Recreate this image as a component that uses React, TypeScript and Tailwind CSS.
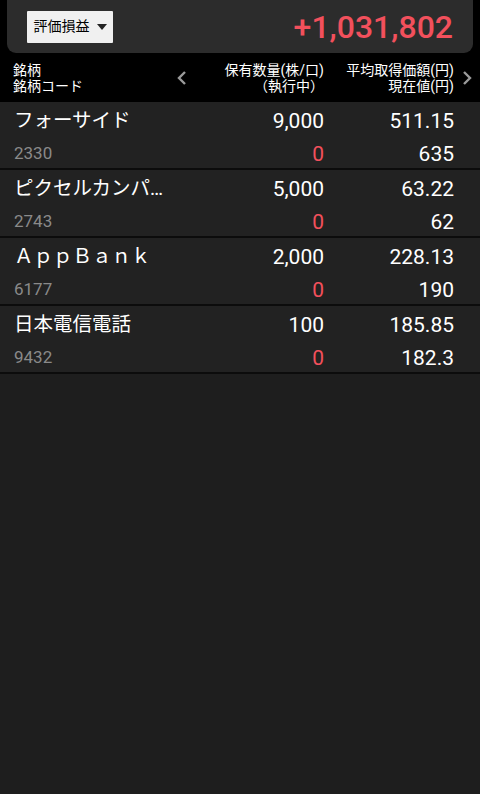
import React from 'react';

const font = { fontFamily: 'Roboto, "Noto Sans CJK JP", sans-serif' };

const rows = [
  { name: 'フォーサイド', code: '2330', qty: '9,000', exec: '0', avg: '511.15', now: '635' },
  { name: 'ピクセルカンパ…', code: '2743', qty: '5,000', exec: '0', avg: '63.22', now: '62' },
  { name: 'ＡｐｐＢａｎｋ', code: '6177', qty: '2,000', exec: '0', avg: '228.13', now: '190' },
  { name: '日本電信電話', code: '9432', qty: '100', exec: '0', avg: '185.85', now: '182.3' },
];

const Chevron: React.FC<{ dir: 'left' | 'right' }> = ({ dir }) => (
  <svg width="10" height="16" viewBox="0 0 10 16" fill="none">
    <path
      d={dir === 'left' ? 'M8 2 L2 8 L8 14' : 'M2 2 L8 8 L2 14'}
      stroke="#9a9a9a"
      strokeWidth="2.4"
    />
  </svg>
);

export default function App() {
  return (
    <div className="w-[480px] h-[794px] bg-[#1e1e1e] text-white overflow-hidden" style={font}>
      {/* summary */}
      <div className="bg-black px-[7px]">
        <div className="h-[53px] bg-[#2c2c2c] rounded-b-[9px] flex items-center justify-between pl-[20px] pr-[20px]">
          <div className="h-[32px] w-[86px] bg-[#f0f0f0] flex items-center justify-center gap-[7px] text-black text-[14px] rounded-[1px]">
            <span>評価損益</span>
            <svg width="10" height="6" viewBox="0 0 10 6">
              <path d="M0 0 L10 0 L5 6 Z" fill="#222" />
            </svg>
          </div>
          <div className="text-[32px] font-medium text-[#f2505c] leading-none">+1,031,802</div>
        </div>
      </div>

      {/* header */}
      <div className="h-[49px] bg-black flex items-center text-[14px] leading-[16px]">
        <div className="w-[170px] pl-[13px]">
          <div>銘柄</div>
          <div>銘柄コード</div>
        </div>
        <div className="w-[24px] flex justify-center">
          <Chevron dir="left" />
        </div>
        <div className="w-[130px] text-right">
          <div>保有数量(株/口)</div>
          <div>（執行中）</div>
        </div>
        <div className="w-[130px] text-right">
          <div>平均取得価額(円)</div>
          <div>現在値(円)</div>
        </div>
        <div className="flex-1 flex justify-center">
          <Chevron dir="right" />
        </div>
      </div>

      {/* rows */}
      {rows.map((r) => (
        <div key={r.code} className="h-[68px] bg-[#222222] border-b-2 border-[#0c0c0c] flex">
          <div className="w-[189px] pl-[14px] pt-[6px]">
            <div className="text-[19.5px] leading-[26px] whitespace-nowrap">{r.name}</div>
            <div className="text-[17px] leading-[20px] mt-[9px] text-[#8a8a8a]">{r.code}</div>
          </div>
          <div className="w-[135px] text-right pt-[6px] text-[21px]">
            <div className="leading-[26px]">{r.qty}</div>
            <div className="leading-[26px] mt-[7px] text-[#f2505c]">{r.exec}</div>
          </div>
          <div className="w-[130px] text-right pt-[6px] text-[21px]">
            <div className="leading-[26px]">{r.avg}</div>
            <div className="leading-[26px] mt-[7px]">{r.now}</div>
          </div>
        </div>
      ))}
    </div>
  );
}
